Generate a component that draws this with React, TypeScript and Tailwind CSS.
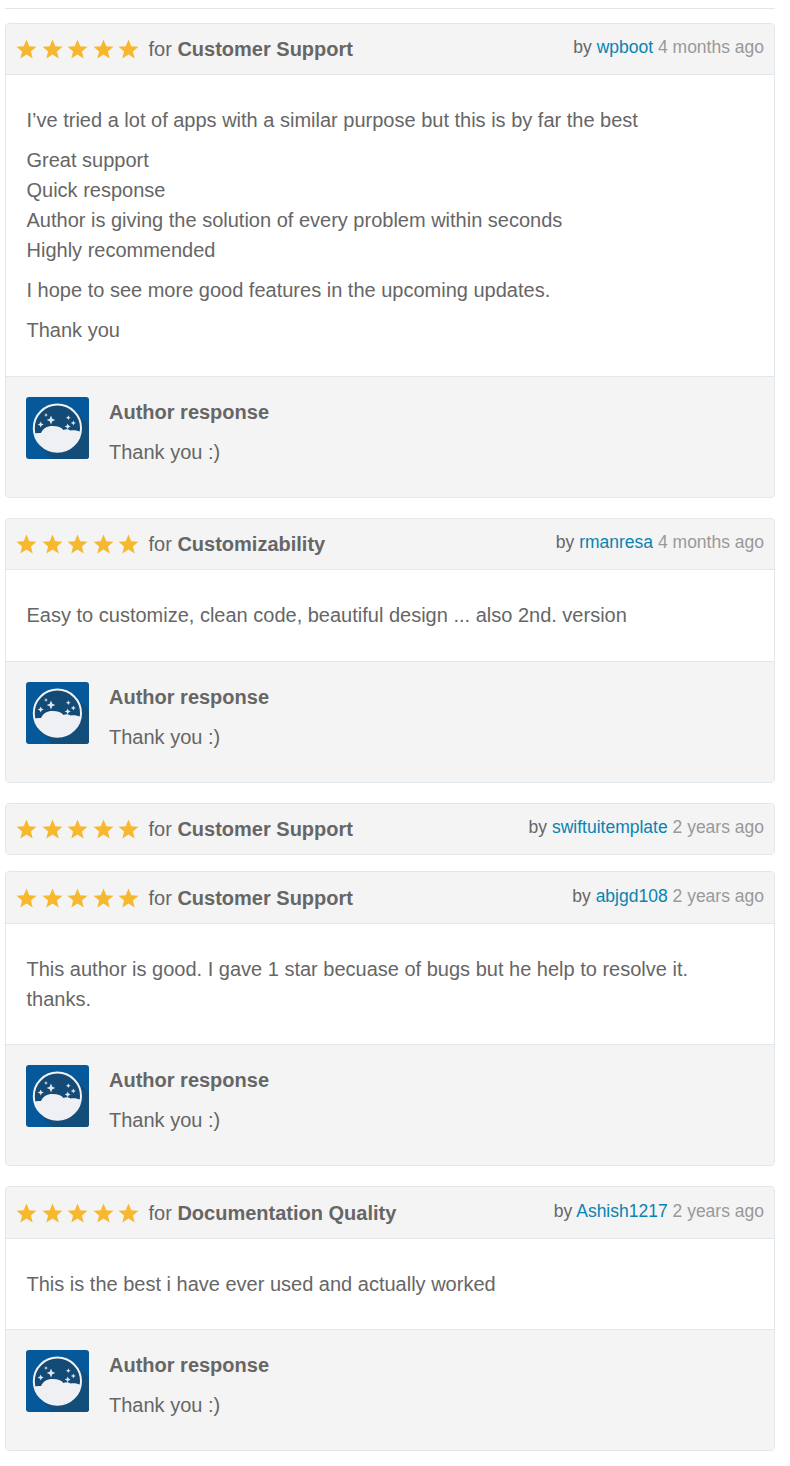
const StarRow = () => (
  <div className="flex w-[123px] shrink-0 justify-between">
    {[0, 1, 2, 3, 4].map((i) => (
      <svg key={i} width="21" height="20" viewBox="0 0 22 21" className="shrink-0">
        <polygon
          points="11,0.5 13.9,7.6 21.5,8.1 15.6,13 17.5,20.4 11,16.4 4.5,20.4 6.4,13 0.5,8.1 8.1,7.6"
          fill="#f5b82e"
        />
      </svg>
    ))}
  </div>
);

const Sparkle = ({ x, y, r }: { x: number; y: number; r: number }) => (
  <path
    d={`M${x} ${y - r}L${x + r * 0.3} ${y - r * 0.3}L${x + r} ${y}L${x + r * 0.3} ${y + r * 0.3}L${x} ${y + r}L${x - r * 0.3} ${y + r * 0.3}L${x - r} ${y}L${x - r * 0.3} ${y - r * 0.3}Z`}
    fill="#dfe6ee"
  />
);

const Avatar = () => (
  <svg width="63" height="62" viewBox="0 0 63 62" className="shrink-0">
    <defs>
      <clipPath id="bgclip">
        <rect width="63" height="62" rx="3" />
      </clipPath>
      <clipPath id="circ">
        <circle cx="31.4" cy="31.2" r="23.6" />
      </clipPath>
    </defs>
    <g clipPath="url(#bgclip)">
      <rect width="63" height="62" fill="#05599b" />
      <path d="M49 14L70 35V70H34L14 49Z" fill="#134d7a" />
    </g>
    <circle cx="31.4" cy="31.2" r="23.6" fill="#134a76" />
    <g clipPath="url(#circ)">
      <path
        d="M4 60V39C7 36.5 11 35.5 15 36C17 31.5 21 29 26.5 29C32 29 35.5 30.5 37.5 33C40 31.8 42.5 32.2 44.5 33.5C48 32.5 53 33.5 58 36.5V60Z"
        fill="#eff0f4"
      />
    </g>
    <circle cx="31.4" cy="31.2" r="23.6" fill="none" stroke="#f0f1f4" strokeWidth="2" />
    <Sparkle x={25} y={23} r={4.4} />
    <Sparkle x={14.7} y={27.5} r={3} />
    <Sparkle x={20} y={18} r={2} />
    <Sparkle x={42.3} y={20.7} r={2.4} />
    <Sparkle x={47.3} y={26} r={2.6} />
    <Sparkle x={41.7} y={29.5} r={3} />
  </svg>
);

type Review = {
  topic: string;
  user: string;
  time: string;
  mb: string;
  tall?: boolean;
  paragraphs?: string[][];
};

const reviews: Review[] = [
  {
    topic: "Customer Support",
    user: "wpboot",
    time: "4 months ago",
    mb: "mb-[20px]",
    paragraphs: [
      ["I’ve tried a lot of apps with a similar purpose but this is by far the best"],
      ["Great support", "Quick response", "Author is giving the solution of every problem within seconds", "Highly recommended"],
      ["I hope to see more good features in the upcoming updates."],
      ["Thank you"],
    ],
  },
  {
    topic: "Customizability",
    user: "rmanresa",
    time: "4 months ago",
    mb: "mb-[20px]",
    paragraphs: [["Easy to customize, clean code, beautiful design ... also 2nd. version"]],
  },
  { topic: "Customer Support", user: "swiftuitemplate", time: "2 years ago", mb: "mb-[16px]" },
  {
    topic: "Customer Support",
    user: "abjgd108",
    time: "2 years ago",
    mb: "mb-[20px]",
    tall: true,
    paragraphs: [["This author is good. I gave 1 star becuase of bugs but he help to resolve it.", "thanks."]],
  },
  {
    topic: "Documentation Quality",
    user: "Ashish1217",
    time: "2 years ago",
    mb: "mb-[16px]",
    tall: true,
    paragraphs: [["This is the best i have ever used and actually worked"]],
  },
];

const Card = ({ r }: { r: Review }) => (
  <div className={`${r.mb} overflow-hidden rounded-[4px] border border-[#e1e8ed] bg-white`}>
    <div
      className={`flex items-center justify-between bg-[#f4f4f4] pl-[10px] pr-[10px] ${
        r.paragraphs ? (r.tall ? "h-[52px] border-b border-[#e1e8ed]" : "h-[51px] border-b border-[#e1e8ed]") : "h-[50px]"
      }`}
    >
      <div className="flex items-center">
        <StarRow />
        <span className="ml-[9.5px] text-[20px] leading-[30px]">
          for <strong className="font-bold">{r.topic}</strong>
        </span>
      </div>
      <div className={`text-[17.5px] leading-[27px] ${r.tall ? "-mt-[3px]" : "-mt-[4px]"}`}>
        by <span className="text-[#0a83b0]">{r.user}</span> <span className="text-[#999999]">{r.time}</span>
      </div>
    </div>
    {r.paragraphs && (
      <>
        <div className={`flex flex-col gap-[10px] pl-[20.5px] pr-[21px] pt-[30px] ${r.tall ? "pb-[30px]" : "pb-[31px]"}`}>
          {r.paragraphs.map((p, i) => (
            <p key={i} className="text-[20px] leading-[30px]">
              {p.map((l, j) => (
                <span key={j} className="block">
                  {l}
                </span>
              ))}
            </p>
          ))}
        </div>
        <div className="flex gap-[20px] border-t border-[#e1e8ed] bg-[#f4f4f4] pb-[30px] pl-[20px] pr-[20px] pt-[20px]">
          <Avatar />
          <div className="flex flex-col gap-[10px] text-[20px] leading-[30px]">
            <strong className="font-bold">Author response</strong>
            <p>Thank you :)</p>
          </div>
        </div>
      </>
    )}
  </div>
);

export default function App() {
  return (
    <div className="min-h-[1466px] bg-white pl-[5px] pr-[15px] pt-[7.5px] font-['Liberation_Sans',Arial,sans-serif] text-[#666666]">
      <div className="mb-[14.5px] h-px bg-[#e1e8ed]" />
      {reviews.map((r, i) => (
        <Card key={i} r={r} />
      ))}
    </div>
  );
}
